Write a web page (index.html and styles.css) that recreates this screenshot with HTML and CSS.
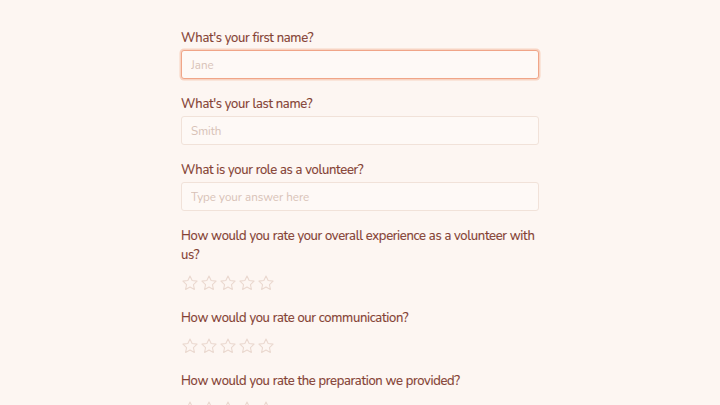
FILE: index.html
```html
<!DOCTYPE html>
<html lang="en">
<head>
<meta charset="utf-8">
<title>Volunteer survey</title>
<link rel="stylesheet" href="styles.css">
</head>
<body>
<svg width="0" height="0" class="defs" aria-hidden="true">
  <symbol id="star" viewBox="0 0 24 24">
    <path d="M12 2.6l2.85 6.05 6.6.85-4.85 4.55 1.25 6.55L12 17.35l-5.85 3.25 1.25-6.55L2.55 9.5l6.6-.85z" fill="none" stroke="currentColor" stroke-width="1.4" stroke-linejoin="round"/>
  </symbol>
</svg>
<main class="form">
  <div class="q">
    <label class="label">What's your first name?</label>
    <input class="input focused" type="text" placeholder="Jane">
  </div>
  <div class="q">
    <label class="label">What's your last name?</label>
    <input class="input" type="text" placeholder="Smith">
  </div>
  <div class="q">
    <label class="label">What is your role as a volunteer?</label>
    <input class="input" type="text" placeholder="Type your answer here">
  </div>
  <div class="q">
    <label class="label">How would you rate your overall experience as a volunteer with us?</label>
    <div class="stars">
      <svg class="star"><use href="#star"/></svg><svg class="star"><use href="#star"/></svg><svg class="star"><use href="#star"/></svg><svg class="star"><use href="#star"/></svg><svg class="star"><use href="#star"/></svg>
    </div>
  </div>
  <div class="q">
    <label class="label">How would you rate our communication?</label>
    <div class="stars">
      <svg class="star"><use href="#star"/></svg><svg class="star"><use href="#star"/></svg><svg class="star"><use href="#star"/></svg><svg class="star"><use href="#star"/></svg><svg class="star"><use href="#star"/></svg>
    </div>
  </div>
  <div class="q">
    <label class="label">How would you rate the preparation we provided?</label>
    <div class="stars">
      <svg class="star"><use href="#star"/></svg><svg class="star"><use href="#star"/></svg><svg class="star"><use href="#star"/></svg><svg class="star"><use href="#star"/></svg><svg class="star"><use href="#star"/></svg>
    </div>
  </div>
</main>
</body>
</html>
```
FILE: styles.css
```css
html, body {
  margin: 0;
  padding: 0;
  background: #fdf6f2;
  height: 100%;
  overflow: hidden;
}
body {
  font-family: "Nunito", "Lato", "Open Sans", sans-serif;
  color: #843f33;
}
.defs {
  position: absolute;
}
.form {
  width: 358px;
  margin: 0 auto;
  padding-top: 29px;
  display: flex;
  flex-direction: column;
  gap: 16px;
}
.q {
  display: flex;
  flex-direction: column;
}
.label {
  font-size: 13px;
  letter-spacing: -0.3px;
  line-height: 19px;
  margin-bottom: 2px;
  color: #843f33;
  -webkit-text-stroke: 0.15px #843f33;
}
.input {
  box-sizing: border-box;
  height: 29px;
  width: 100%;
  margin: 0;
  padding: 0 9px;
  font-family: inherit;
  font-size: 11.6px;
  color: #843f33;
  background: #fef9f6;
  border: 1px solid #f1e2d9;
  border-radius: 3px;
  outline: none;
}
.input::placeholder {
  color: #d8c2b7;
}
.input.focused {
  border-color: #f0a588;
  box-shadow: 0 0 0 1.5px #f8d3c2;
}
.stars {
  display: flex;
  gap: 1px;
  margin-top: 7px;
  margin-bottom: 1px;
  color: #ead8cf;
}
.star {
  width: 18px;
  height: 18px;
}
```
